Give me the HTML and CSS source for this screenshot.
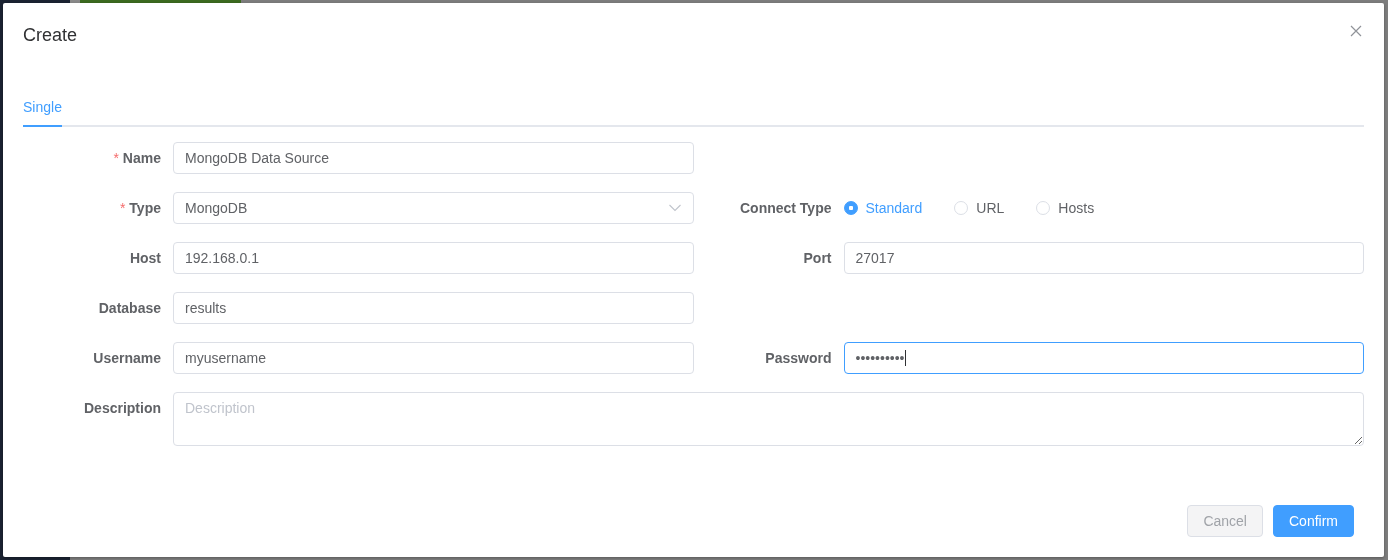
FILE: index.html
```html
<!DOCTYPE html>
<html lang="en">
<head>
    <meta charset="UTF-8">
    <meta name="viewport" content="width=device-width, initial-scale=1.0">
    <title>Create data source</title>
    <link rel="stylesheet" href="styles.css">
</head>
<body>
    <div class="page">
        <aside class="sidebar"></aside>
        <div class="page__main">
            <div class="topbar">
                <span class="topbar__gap"></span>
                <span class="topbar__active"></span>
            </div>
        </div>
    </div>

    <div class="dialog">
        <header class="dialog__header">
            <span class="dialog__title">Create</span>
            <button class="dialog__close" aria-label="Close">
                <svg width="12" height="12" viewBox="0 0 12 12"><path d="M1 1 L11 11 M11 1 L1 11" stroke="#909399" stroke-width="1.2" fill="none"/></svg>
            </button>
        </header>

        <div class="dialog__body">
            <div class="tabs">
                <div class="tabs__item tabs__item_active">Single</div>
            </div>

            <form class="form">
                <div class="form__row">
                    <div class="form__item">
                        <label class="form__label form__label_required">Name</label>
                        <div class="form__control"><input class="input" type="text" value="MongoDB Data Source"></div>
                    </div>
                    <div class="form__item"></div>
                </div>

                <div class="form__row">
                    <div class="form__item">
                        <label class="form__label form__label_required">Type</label>
                        <div class="form__control select">
                            <input class="input" type="text" value="MongoDB" readonly>
                            <svg class="select__arrow" width="12" height="8" viewBox="0 0 12 8"><path d="M0.5 1 L6 6.5 L11.5 1" stroke="#c0c4cc" stroke-width="1.1" fill="none"/></svg>
                        </div>
                    </div>
                    <div class="form__item">
                        <label class="form__label">Connect Type</label>
                        <div class="form__control radios">
                            <label class="radio radio_checked"><span class="radio__inner"></span><span class="radio__label">Standard</span></label>
                            <label class="radio"><span class="radio__inner"></span><span class="radio__label">URL</span></label>
                            <label class="radio"><span class="radio__inner"></span><span class="radio__label">Hosts</span></label>
                        </div>
                    </div>
                </div>

                <div class="form__row">
                    <div class="form__item">
                        <label class="form__label">Host</label>
                        <div class="form__control"><input class="input" type="text" value="192.168.0.1"></div>
                    </div>
                    <div class="form__item">
                        <label class="form__label">Port</label>
                        <div class="form__control"><input class="input" type="text" value="27017"></div>
                    </div>
                </div>

                <div class="form__row">
                    <div class="form__item">
                        <label class="form__label">Database</label>
                        <div class="form__control"><input class="input" type="text" value="results"></div>
                    </div>
                    <div class="form__item"></div>
                </div>

                <div class="form__row">
                    <div class="form__item">
                        <label class="form__label">Username</label>
                        <div class="form__control"><input class="input" type="text" value="myusername"></div>
                    </div>
                    <div class="form__item">
                        <label class="form__label">Password</label>
                        <div class="form__control password">
                            <input class="input input_focus" type="password" value="mypassword">
                            <span class="password__caret"></span>
                        </div>
                    </div>
                </div>

                <div class="form__row form__row_full">
                    <div class="form__item">
                        <label class="form__label">Description</label>
                        <div class="form__control"><textarea class="textarea" placeholder="Description"></textarea></div>
                    </div>
                </div>
            </form>
        </div>

        <footer class="dialog__footer">
            <button class="button button_plain">Cancel</button>
            <button class="button button_primary">Confirm</button>
        </footer>
    </div>
</body>
</html>
```

FILE: styles.css
```css
body {
    margin: 0;
    font-family: 'Liberation Sans', Arial, sans-serif;
    font-size: 14px;
    color: #606266;
    background-color: #7d7d7d;
    overflow: hidden;
}

.page {
    display: flex;
    height: 560px;
}

.sidebar {
    width: 70px;
    background-color: #1b2332;
}

.page__main {
    flex: 1;
}

.topbar {
    display: flex;
    height: 3px;
}

.topbar__gap {
    width: 10px;
    background-color: #8a8a8a;
}

.topbar__active {
    width: 161px;
    background-color: #3c6a20;
}

/* modal over the page */
.dialog {
    position: fixed;
    top: 3px;
    left: 3px;
    right: 4px;
    bottom: 3px;
    display: flex;
    flex-direction: column;
    background-color: #ffffff;
    border-radius: 2px;
    box-shadow: 0 1px 3px rgba(0, 0, 0, 0.3);
}

.dialog__header {
    position: relative;
    padding: 20px 20px 10px;
}

.dialog__title {
    display: block;
    font-size: 18px;
    line-height: 24px;
    color: #303133;
}

.dialog__close {
    position: absolute;
    top: 22px;
    right: 22px;
    padding: 0;
    border: none;
    background: none;
    line-height: 0;
}

.dialog__body {
    padding: 30px 20px;
}

.tabs {
    display: flex;
    height: 40px;
    margin-bottom: 15px;
    box-shadow: inset 0 -2px 0 #e4e7ed;
}

.tabs__item {
    line-height: 40px;
    font-size: 14px;
    color: #303133;
}

.tabs__item_active {
    color: #409eff;
    box-shadow: inset 0 -2px 0 #409eff;
}

.form__row {
    display: grid;
    grid-template-columns: 1fr 1fr;
    margin-bottom: 18px;
}

.form__row_full {
    grid-template-columns: 1fr;
}

.form__item {
    display: flex;
}

.form__label {
    width: 150px;
    flex-shrink: 0;
    box-sizing: border-box;
    padding-right: 12px;
    text-align: right;
    line-height: 32px;
    font-weight: bold;
    color: #606266;
}

.form__label_required::before {
    content: "*";
    color: #f56c6c;
    margin-right: 4px;
    font-weight: normal;
}

.form__control {
    position: relative;
    flex: 1;
}

.input {
    display: block;
    width: 100%;
    height: 32px;
    box-sizing: border-box;
    padding: 0 11px;
    border: 1px solid #dcdfe6;
    border-radius: 4px;
    font-family: inherit;
    font-size: 14px;
    color: #606266;
    background-color: #ffffff;
    outline: none;
}

.input_focus {
    border-color: #409eff;
}

.select__arrow {
    position: absolute;
    right: 13px;
    top: 12px;
}

.password__caret {
    position: absolute;
    left: 61px;
    top: 8px;
    width: 1px;
    height: 16px;
    background-color: #303133;
}

.radios {
    display: flex;
    align-items: center;
    height: 32px;
}

.radio {
    display: flex;
    align-items: center;
    margin-right: 32px;
    color: #606266;
}

.radio__inner {
    width: 14px;
    height: 14px;
    box-sizing: border-box;
    border: 1px solid #dcdfe6;
    border-radius: 50%;
    background-color: #ffffff;
}

.radio__label {
    padding-left: 8px;
}

.radio_checked .radio__inner {
    border-color: #409eff;
    background: radial-gradient(circle, #ffffff 0 2px, #409eff 2.5px);
}

.radio_checked .radio__label {
    color: #409eff;
}

.textarea {
    display: block;
    width: 100%;
    height: 54px;
    box-sizing: border-box;
    padding: 5px 11px;
    border: 1px solid #dcdfe6;
    border-radius: 4px;
    font-family: inherit;
    font-size: 14px;
    line-height: 1.5;
    color: #606266;
    resize: vertical;
    outline: none;
}

.textarea::placeholder {
    color: #c0c4cc;
}

.dialog__footer {
    margin-top: auto;
    display: flex;
    justify-content: flex-end;
    gap: 10px;
    padding: 10px 30px 20px;
}

.button {
    height: 32px;
    padding: 0 15px;
    border: 1px solid #dcdfe6;
    border-radius: 4px;
    font-family: inherit;
    font-size: 14px;
    line-height: 30px;
}

.button_plain {
    background-color: #f4f4f5;
    color: #a0a3a8;
}

.button_primary {
    background-color: #409eff;
    border-color: #409eff;
    color: #ffffff;
}
```
